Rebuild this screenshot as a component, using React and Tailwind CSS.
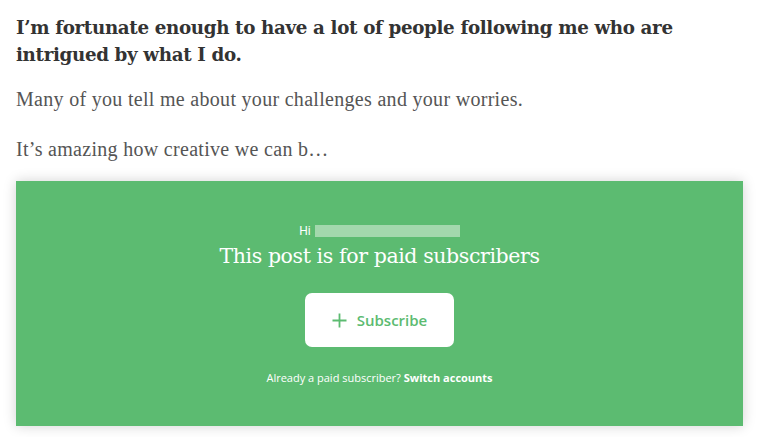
import React from 'react';

const GREEN = 'bg-[#5cbb71]';

const Paywall = () => (
  <div className={`mx-4 mt-[19px] h-[245px] ${GREEN} shadow-[0_0_12px_rgba(0,0,0,0.18)] flex flex-col items-center`}>
    <div className="mt-[43px] flex items-center gap-[4px] text-[12px] leading-[14px] text-white font-['Roboto',sans-serif]">
      <span>Hi</span>
      <span className="inline-block w-[145px] h-[12px] bg-[#a3d8ad]" />
    </div>
    <h2 className="mt-[4px] text-[20.5px] leading-[28px] text-white font-light font-['DejaVu_Serif',serif] tracking-[-0.4px]">
      This post is for paid subscribers
    </h2>
    <button className="mt-[23px] w-[149px] h-[54px] bg-white rounded-[7px] flex items-center justify-center gap-[10px] text-[#5cbb71] font-['Open_Sans',sans-serif] font-semibold text-[15px]">
      <svg width="15" height="15" viewBox="0 0 15 15" fill="none" stroke="currentColor" strokeWidth="1.8">
        <path d="M7.5 0.5v14M0.5 7.5h14" />
      </svg>
      <span>Subscribe</span>
    </button>
    <p className="mt-[24px] text-[11px] leading-[14px] text-white font-['Open_Sans',sans-serif]">
      Already a paid subscriber? <span className="font-bold">Switch accounts</span>
    </p>
  </div>
);

export default function App() {
  return (
    <div className="w-[759px] h-[437px] bg-white overflow-hidden">
      <div className="px-4 pt-[14px]">
        <h1 className="text-[18.3px] leading-[27px] font-bold text-[#333] font-['DejaVu_Serif',serif] tracking-[-0.35px]">
          I’m fortunate enough to have a lot of people following me who are
          <br />
          intrigued by what I do.
        </h1>
        <p className="mt-[18px] text-[20px] leading-[26px] text-[#555] font-['Liberation_Serif',serif] tracking-[0.3px]">
          Many of you tell me about your challenges and your worries.
        </p>
        <p className="mt-[24px] text-[20px] leading-[26px] text-[#555] font-['Liberation_Serif',serif] tracking-[0.3px]">
          It’s amazing how creative we can b…
        </p>
      </div>
      <Paywall />
    </div>
  );
}
